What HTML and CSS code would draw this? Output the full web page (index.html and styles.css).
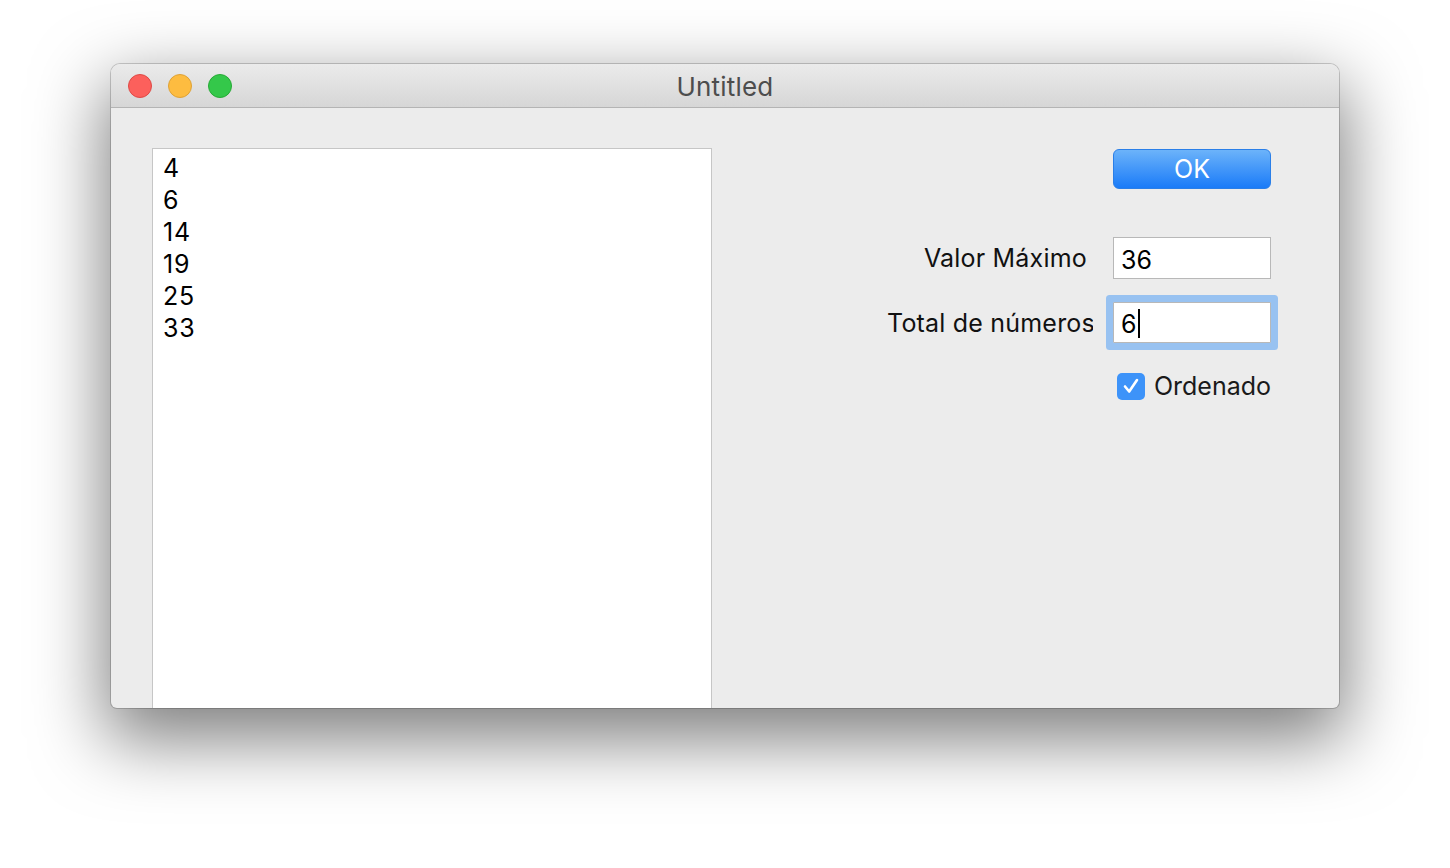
FILE: index.html
```html
<!DOCTYPE html>
<html lang="en">
<head>
    <meta charset="UTF-8">
    <title>Untitled</title>
    <link rel="stylesheet" href="styles.css">
</head>
<body>
    <div class="window">
        <div class="titlebar">
            <div class="lights">
                <span class="light red"></span>
                <span class="light yellow"></span>
                <span class="light green"></span>
            </div>
            <div class="title">Untitled</div>
        </div>
        <div class="content">
            <div class="listbox">
                <div>4</div>
                <div>6</div>
                <div>14</div>
                <div>19</div>
                <div>25</div>
                <div>33</div>
            </div>
            <div class="side">
                <button class="ok">OK</button>
                <div class="row row-valor">
                    <label class="label label-valor">Valor Máximo</label>
                    <div class="field">36</div>
                </div>
                <div class="row row-total">
                    <label class="label">Total de números</label>
                    <div class="field focused">6<span class="caret"></span></div>
                </div>
                <div class="check-row">
                    <span class="checkbox">
                        <svg width="28" height="28" viewBox="0 0 28 28">
                            <path d="M8 14.5 L12.2 19.5 L20 8" fill="none" stroke="#fff" stroke-width="2.6" stroke-linecap="round" stroke-linejoin="round"/>
                        </svg>
                    </span>
                    <span class="check-label">Ordenado</span>
                </div>
            </div>
        </div>
    </div>
</body>
</html>
```

FILE: styles.css
```css
body {
    margin: 0;
    padding: 0;
    background: #ffffff;
    font-family: Inter, Roboto, "Liberation Sans", sans-serif;
    height: 868px;
    overflow: hidden;
}

.window {
    margin: 64px 0 0 111px;
    width: 1228px;
    height: 644px;
    background: #ececec;
    border-radius: 9px 9px 6px 6px;
    overflow: hidden;
    display: flex;
    flex-direction: column;
    box-shadow: 0 0 0 1px rgba(0, 0, 0, 0.18), 0 26px 70px 6px rgba(0, 0, 0, 0.5);
}

.titlebar {
    height: 43px;
    flex-shrink: 0;
    background: linear-gradient(#ebebeb, #d6d6d6);
    border-bottom: 1px solid #b4b4b4;
    display: flex;
    align-items: center;
    position: relative;
}

.lights {
    display: flex;
    gap: 16px;
    padding-left: 17px;
}

.light {
    width: 24px;
    height: 24px;
    border-radius: 50%;
    box-sizing: border-box;
}

.red {
    background: #fc605c;
    border: 1px solid #de4a46;
}

.yellow {
    background: #fdbc40;
    border: 1px solid #dea236;
}

.green {
    background: #34c84a;
    border: 1px solid #27aa36;
}

.title {
    position: absolute;
    left: 0;
    right: 0;
    top: 7px;
    text-align: center;
    font-size: 26px;
    letter-spacing: 0.2px;
    color: #4d4d4d;
}

.content {
    flex: 1;
    display: flex;
    justify-content: space-between;
    padding: 40px 68px 0 41px;
    min-height: 0;
}

.listbox {
    width: 560px;
    height: 640px;
    box-sizing: border-box;
    background: #fff;
    border: 1px solid #c6c6c6;
    border-bottom: none;
    padding: 3px 0 0 10px;
    font-size: 25px;
    letter-spacing: 0.8px;
    line-height: 32px;
    color: #000;
}

.side {
    display: flex;
    flex-direction: column;
    align-items: flex-end;
}

.ok {
    margin-top: 1px;
    width: 158px;
    height: 40px;
    border: 1px solid #2a7fe8;
    border-radius: 6px;
    background: linear-gradient(#6cb3fa, #1a7bf8);
    color: #fff;
    font-family: Inter, Roboto, "Liberation Sans", sans-serif;
    font-size: 25px;
    padding: 0;
}

.row {
    display: flex;
    align-items: center;
}

.row-valor {
    margin-top: 48px;
}

.row-total {
    margin-top: 23px;
}

.label {
    width: 206px;
    margin-right: 20px;
    text-align: right;
    white-space: nowrap;
    overflow: hidden;
    font-size: 25px;
    letter-spacing: 0.2px;
    color: #111;
}

.label-valor {
    width: 200px;
    margin-right: 26px;
}

.field {
    width: 158px;
    height: 42px;
    box-sizing: border-box;
    background: #fff;
    border: 1px solid #b8b8b8;
    padding: 7px 0 0 7px;
    font-size: 25px;
    color: #000;
}

.field.focused {
    height: 41px;
    padding-top: 6px;
    box-shadow: 0 0 0 7px #98c2f1;
    border-radius: 1px;
}

.caret {
    display: inline-block;
    width: 2px;
    height: 29px;
    background: #000;
    vertical-align: -5px;
    margin-left: 1px;
}

.check-row {
    margin-top: 28px;
    display: flex;
    align-items: center;
    gap: 9px;
}

.checkbox {
    width: 28px;
    height: 27px;
    border-radius: 5px;
    background: #3d93f9;
    display: flex;
    align-items: center;
    justify-content: center;
}

.check-label {
    font-size: 25px;
    color: #1a1a1a;
}
```
